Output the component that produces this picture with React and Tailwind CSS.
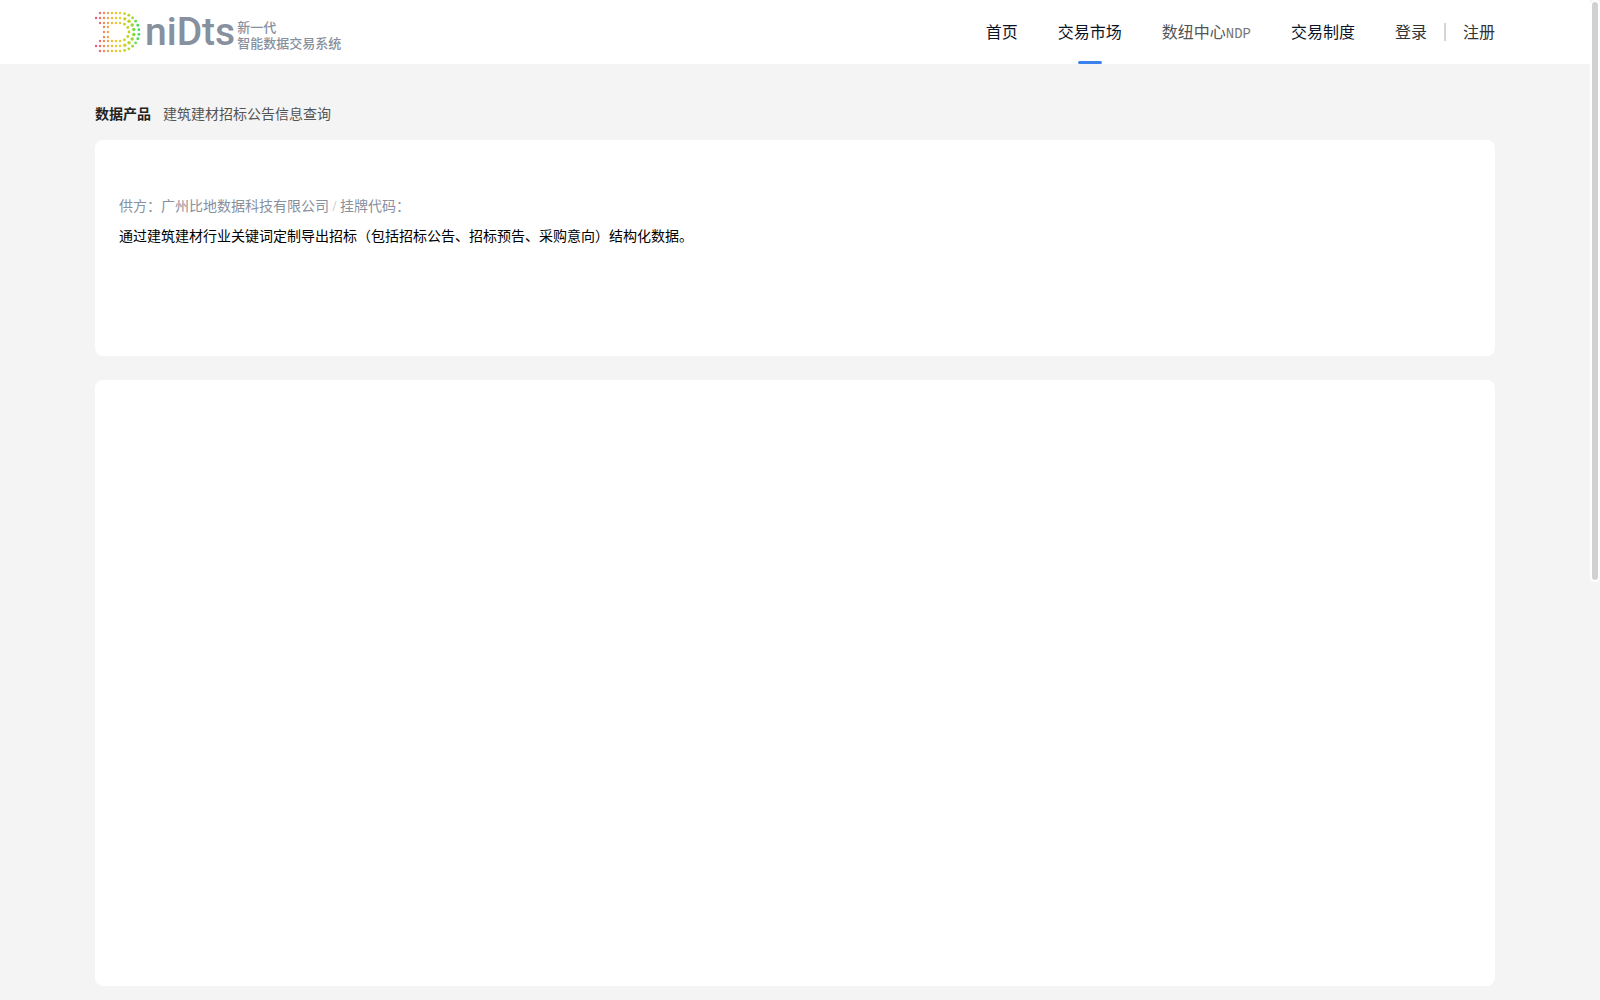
const FONT = "font-['Noto_Sans_CJK_SC',sans-serif]";

function arcDots(radius, count) {
  return Array.from({ length: count }, (_, i) => {
    const a = -Math.PI / 2 + (Math.PI * (i + 1)) / (count + 1);
    return [25 + radius * Math.cos(a), 21 + radius * Math.sin(a)];
  });
}

function rowDots(from, radius) {
  const dots = [];
  for (let x = 25; x >= from; x -= 4) dots.push([x, 21 - radius], [x, 21 + radius]);
  return dots;
}

const DOTS = [
  ...rowDots(5, 19),
  ...arcDots(19, 12).map(([x, y]) => [x, y, 1.4]),
  ...rowDots(1, 14),
  ...arcDots(14, 8).map(([x, y]) => [x, y, 1.7]),
  ...rowDots(5, 9),
  ...arcDots(9, 5).map(([x, y]) => [x, y, 1.4]),
  ...[16, 21, 26].flatMap((y) => [[9, y], [13, y]]),
];

function Logo() {
  return (
    <a href="#" aria-label="niDts" className="flex items-center text-[#87909e]">
      <svg width="48" height="42" viewBox="0 0 48 42" aria-hidden="true">
        <defs>
          <linearGradient id="dots" gradientUnits="userSpaceOnUse" x1="0" y1="0" x2="46" y2="0">
            <stop offset="0" stopColor="#f5427f" />
            <stop offset="0.15" stopColor="#f47560" />
            <stop offset="0.3" stopColor="#f2a944" />
            <stop offset="0.5" stopColor="#e6d021" />
            <stop offset="0.75" stopColor="#b9d51c" />
            <stop offset="1" stopColor="#26df6b" />
          </linearGradient>
        </defs>
        <g fill="url(#dots)">
          {DOTS.map(([x, y, r = 1.2], i) => (
            <circle key={i} cx={x} cy={y} r={r} />
          ))}
        </g>
      </svg>
      <span className="ml-0.5 font-['Roboto',sans-serif] text-[39px] leading-[40px] font-medium">niDts</span>
      <span className="ml-0.5 flex flex-col pt-1.5 text-[13px] leading-4 font-medium">
        <span>新一代</span>
        <span>智能数据交易系统</span>
      </span>
    </a>
  );
}

function Header() {
  return (
    <header className="bg-white">
      <div className="mx-auto flex h-16 max-w-[1400px] items-center justify-between">
        <Logo />
        <nav className="flex h-full items-center text-base leading-6 text-[#0b1526]">
          <div className="flex h-full items-center gap-10">
            <a href="#" className="pb-0.5">首页</a>
            <a href="#" className="relative flex h-full items-center pb-0.5">
              交易市场
              <span className="absolute bottom-0 left-1/2 h-[3px] w-6 -translate-x-1/2 rounded-sm bg-[#3a82f0]" />
            </a>
            <a href="#" className="pb-0.5 text-[#555]">
              数纽中心<span className="font-['Liberation_Mono',monospace] text-sm leading-none text-[#777]">NDP</span>
            </a>
            <a href="#" className="pb-0.5">交易制度</a>
            <a href="#" className="pb-0.5 text-[#333]">登录</a>
          </div>
          <span className="mx-[17px] h-[18px] w-0.5 bg-[#d4d4d4]" />
          <a href="#" className="pb-0.5 text-[#333]">注册</a>
        </nav>
      </div>
    </header>
  );
}

export default function App() {
  return (
    <div className={`${FONT} flex h-screen overflow-hidden bg-[#f4f4f4]`}>
      <div className="min-w-0 flex-1">
        <Header />
        <main className="mx-auto max-w-[1400px] pt-[39px] pb-3.5">
          <div className="mb-[17px] flex gap-3 text-sm leading-5">
            <a href="#" className="font-bold text-[#222]">数据产品</a>
            <span className="text-[#555]">建筑建材招标公告信息查询</span>
          </div>
          <section className="min-h-[216px] rounded-lg bg-white px-6 pt-[50px] text-sm leading-[30px]">
            <p className="text-[#87909e]">
              供方：广州比地数据科技有限公司
              <span className="font-['Liberation_Serif',serif] leading-none whitespace-pre text-[#bbb]"> / </span>
              挂牌代码：
            </p>
            <p className="text-black">
              通过建筑建材行业关键词定制导出招标（包括招标公告、招标预告、采购意向）结构化数据。
            </p>
          </section>
          <section className="mt-6 min-h-[606px] rounded-lg bg-white" />
        </main>
      </div>
      <div className="w-2.5" aria-hidden="true">
        <div className="h-[58.2%] rounded-full bg-white p-0.5">
          <div className="h-full rounded-full bg-[#d1d1d1]" />
        </div>
      </div>
    </div>
  );
}
